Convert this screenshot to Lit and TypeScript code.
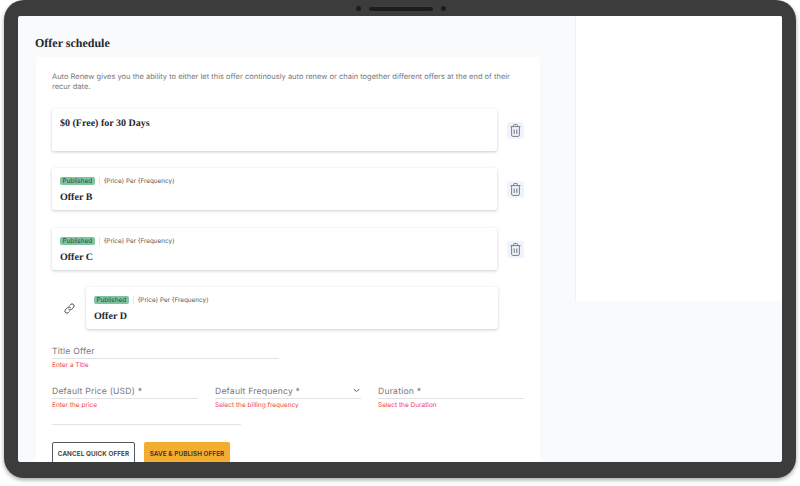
import { LitElement, html, css } from "lit";
import { customElement } from "lit/decorators.js";

const trash = html`<svg width="11" height="13" viewBox="0 0 11 13" fill="none" stroke="#7b7e82" stroke-width="1"><path d="M0.5 2.6h10M3.6 2.4V1.2c0-.4.3-.7.7-.7h2.4c.4 0 .7.3.7.7v1.2M1.6 2.8v8.4c0 .7.5 1.2 1.2 1.2h5.4c.7 0 1.2-.5 1.2-1.2V2.8"/><path d="M4.2 5.5v4.5M6.8 5.5v4.5" stroke-width="1.1"/></svg>`;
const link = html`<svg width="11" height="11" viewBox="0 0 11 11" fill="none" stroke="#44474b" stroke-width="1" stroke-linecap="round"><path d="M4.6 6.4a2 2 0 0 0 2.9 0l2-2a2 2 0 0 0-2.9-2.9l-.8.8"/><path d="M6.4 4.6a2 2 0 0 0-2.9 0l-2 2a2 2 0 0 0 2.9 2.9l.8-.8"/></svg>`;
const chevron = html`<svg class="chev" width="7" height="5" viewBox="0 0 7 5" fill="none" stroke="#55585c" stroke-width="1"><path d="M0.8 1l2.7 2.7L6.2 1"/></svg>`;

@customElement("app-root")
export class AppRoot extends LitElement {
  static styles = css`
    :host { display: block; width: 800px; height: 486px; background: #fff; overflow: hidden; font-family: Inter, "Liberation Sans", sans-serif; text-rendering: geometricPrecision; }
    * { box-sizing: border-box; }
    .bezel { position: relative; margin: 0 4px; width: 792px; height: 478px; background: #3c3c3c; border-radius: 20px; padding: 16px 14px; box-shadow: 0 2px 4px rgba(0,0,0,.35); }
    .cam { position: absolute; top: 6px; left: 352px; display: flex; align-items: center; gap: 8px; height: 5px; }
    .dot { width: 5px; height: 5px; border-radius: 50%; background: #1d1d1d; }
    .pill { width: 64px; height: 4px; border-radius: 2px; background: #1d1d1d; }
    .screen { display: flex; height: 446px; background: #f9fafc; overflow: hidden; border-radius: 2px; }
    .main { width: 522px; padding: 20px 0 0 18px; flex: none; }
    .side { width: 207px; height: 285px; margin-left: 35px; background: #fff; flex: none; border-left: 1px solid #f1f2f5; }
    h1 { margin: 0 0 6px -1px; font: 700 12px/15px "Liberation Serif", serif; color: #26282b; height: 15px; }
    .card { background: #fff; padding: 15px 16px 0; height: 410px; border-radius: 2px; }
    .intro { margin: 0 0 17px; font-size: 7.5px; line-height: 10px; color: #77797c; height: 20px; }
    .row { display: flex; align-items: center; margin-bottom: 17px; }
    .row.b { margin-bottom: 18px; }
    .row.d { margin-bottom: 15px; }
    .lnk { width: 34px; display: flex; justify-content: center; flex: none; }
    .offer { width: 445px; height: 42px; background: #fff; border-radius: 2px; box-shadow: 0 1px 3px rgba(40,50,60,.25); padding: 8px; flex: none; }
    .d .offer { width: 412px; }
    .meta { display: flex; align-items: center; height: 10px; margin: 0 0 5px; font-size: 6.3px; color: #55585c; }
    .badge { background: #7fc4a2; color: #2c4a3d; border-radius: 2px; padding: 0 2.5px; height: 8px; line-height: 8px; font-size: 6.4px; }
    .sep { width: 1px; height: 8px; background: #e4e5e7; margin: 0 4px; }
    .name { font: 700 10px/13px "Liberation Serif", serif; color: #26282b; }
    .trash { width: 17px; height: 17px; margin-left: 10px; background: #eef3fd; border-radius: 3px; display: flex; align-items: center; justify-content: center; }
    .input { display: flex; justify-content: space-between; align-items: center; height: 15px; padding: 1px 1px 0 0; border-bottom: 1px solid #e2e3e5; font-size: 8.6px; letter-spacing: .2px; color: #77797c; }
    .chev { margin-bottom: 3px; }
    .err { font-size: 6.5px; line-height: 8px; margin-top: 2px; color: #f0444a; height: 8px; }
    .title { width: 227px; margin-bottom: 15px; }
    .cols { display: grid; grid-template-columns: 146px 146px 146px; gap: 17px; }
    .lone { width: 189px; height: 1px; background: #e2e3e5; margin: 15px 0 17px; }
    .btns { display: flex; gap: 9px; }
    button { height: 24px; border-radius: 2px; font: 600 6.3px/1 Inter, sans-serif; letter-spacing: .1px; color: #303235; padding: 0; }
    .cancel { width: 83px; background: #fff; border: 1px solid #55585c; }
    .save { width: 86px; background: #f3ae2f; border: none; }
  `;

  offer(name: string) {
    return html`<div class="offer">
      <div class="meta"><span class="badge">Published</span><span class="sep"></span><span>{Price} Per {Frequency}</span></div>
      <div class="name">${name}</div>
    </div>`;
  }

  render() {
    return html`<div class="bezel">
      <div class="cam"><span class="dot"></span><span class="pill"></span><span class="dot"></span></div>
      <div class="screen">
        <div class="main">
          <h1>Offer schedule</h1>
          <div class="card">
            <p class="intro">Auto Renew gives you the ability to either let this offer continously auto renew or chain together different offers at the end of their recur date.</p>
            <div class="row">
              <div class="offer"><div class="name">$0 (Free) for 30 Days</div></div>
              <div class="trash">${trash}</div>
            </div>
            <div class="row b">${this.offer("Offer B")}<div class="trash">${trash}</div></div>
            <div class="row">${this.offer("Offer C")}<div class="trash">${trash}</div></div>
            <div class="row d"><div class="lnk">${link}</div>${this.offer("Offer D")}</div>
            <div class="title"><div class="input">Title Offer</div><div class="err">Enter a Title</div></div>
            <div class="cols">
              <div><div class="input">Default Price (USD) *</div><div class="err">Enter the price</div></div>
              <div><div class="input">Default Frequency *${chevron}</div><div class="err">Select the billing frequency</div></div>
              <div><div class="input">Duration *</div><div class="err">Select the Duration</div></div>
            </div>
            <div class="lone"></div>
            <div class="btns"><button class="cancel">CANCEL QUICK OFFER</button><button class="save">SAVE &amp; PUBLISH OFFER</button></div>
          </div>
        </div>
        <div class="side"></div>
      </div>
    </div>`;
  }
}
